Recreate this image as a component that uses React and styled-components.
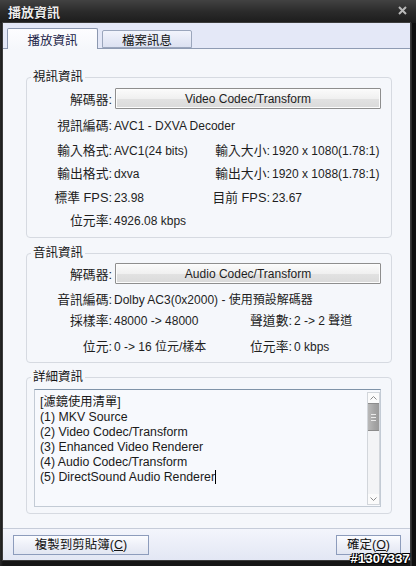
import React from 'react'
import styled, { createGlobalStyle } from 'styled-components'

const GlobalStyle = createGlobalStyle`
  html, body {
    margin: 0;
    padding: 0;
    background: #151515;
  }
  body {
    font-family: "Liberation Sans", "Noto Sans CJK TC", sans-serif;
    font-size: 12px;
    color: #1e1e1e;
  }
`

const Window = styled.div`
  position: relative;
  width: 416px;
  height: 566px;
  display: flex;
  flex-direction: column;
  background: linear-gradient(90deg, #2a2a2a 0, #161616 3px, #161616 410px, #4a4a4a 411px, #101010 412px);
  overflow: hidden;
`

const TitleBar = styled.div`
  height: 23px;
  flex: none;
  display: flex;
  align-items: center;
  justify-content: space-between;
  padding: 0 9px 0 8px;
  background: linear-gradient(#424242, #2b2b2b 50%, #1c1c1c);
`

const Title = styled.span`
  color: #ececec;
  font-weight: bold;
  font-size: 13px;
  text-shadow: 0 1px 1px #000;
`

const CloseIcon = styled.svg`
  width: 9px;
  height: 9px;
  margin-top: -3px;
`

const Body = styled.div`
  flex: 1;
  margin: 0 6px 6px 3px;
  display: flex;
  flex-direction: column;
  background: #f5f7fb;
  box-shadow: 0 0 0 1px #3c3c3c;
`

const TabStrip = styled.div`
  height: 25px;
  flex: none;
  display: flex;
  align-items: flex-end;
  gap: 4px;
  padding-left: 4px;
  background: #e4e8f7;
  border-bottom: 1px solid #8f9bb3;
`

const Tab = styled.div`
  width: ${p => p.$w}px;
  height: ${p => (p.$active ? 21 : 18)}px;
  box-sizing: border-box;
  display: flex;
  align-items: center;
  justify-content: center;
  padding-top: ${p => (p.$active ? 1 : 0)}px;
  margin-bottom: ${p => (p.$active ? -1 : 0)}px;
  border: 1px solid ${p => (p.$active ? '#8c98b0' : '#9ba6bc')};
  border-bottom: ${p => (p.$active ? 'none' : '1px solid #9ba6bc')};
  border-radius: 2px 2px 0 0;
  background: ${p => (p.$active
    ? 'linear-gradient(#fdfdff, #f5f7fb)'
    : 'linear-gradient(#f2f4fc, #dce1f1)')};
  color: ${p => (p.$active ? '#1c2448' : '#141414')};
  font-size: 12.5px;
`

const Panel = styled.div`
  flex: 1;
  display: flex;
  flex-direction: column;
  padding: 20px 18px 0 23px;
`

const Group = styled.fieldset`
  margin: ${p => p.$top || 0}px 0 0 0;
  padding: ${p => p.$pt}px 0 ${p => p.$pb}px 0;
  min-inline-size: 0;
  border: 1px solid #d6dae1;
  border-radius: 4px;
`

const Legend = styled.legend`
  margin-left: 4px;
  padding: 0 2px;
  line-height: 16px;
  font-size: 12.5px;
  color: #161616;
`

const FieldGrid = styled.div`
  display: grid;
  grid-template-columns: ${p => p.$cols};
  grid-template-rows: ${p => p.$rows};
  align-items: baseline;
  line-height: 16px;
`

const Label = styled.span`
  text-align: right;
  white-space: nowrap;
  padding-top: 6px;
  font-size: 12.8px;
`

const ButtonLabel = styled(Label)`
  align-self: center;
  padding-top: 0;
`

const Value = styled.span`
  padding-left: 2px;
  padding-top: 6px;
  white-space: nowrap;
  grid-column: ${p => (p.$span ? '2 / -1' : 'auto')};
`

const CodecButton = styled.button`
  grid-column: 2 / -1;
  align-self: start;
  height: 21px;
  margin: 0 10px 0 3px;
  padding: 0;
  font: inherit;
  color: #1e1e1e;
  border: 1px solid #8e8e8e;
  border-radius: 1px;
  background: linear-gradient(#fbfbfb, #f0f0f0 50%, #e2e2e2 51%, #dadada);
  box-shadow: inset 0 0 0 1px #fcfcfc;
`

const TextBox = styled.div`
  height: 116px;
  margin: 0 10px 0 7px;
  display: flex;
  border: 1px solid #c3cbd5;
  border-top-color: #7f93a8;
  background: #f7f9fd;
`

const TextLines = styled.div`
  flex: 1;
  padding: 5px 0 0 5px;
  line-height: 15px;
  font-size: 12.3px;
  color: #1a1a1a;
`

const Caret = styled.span`
  display: inline-block;
  width: 1px;
  height: 14px;
  vertical-align: -3px;
  background: #000;
`

const ScrollBar = styled.div`
  width: 11px;
  margin: 2px 0 1px 0;
  display: flex;
  flex-direction: column;
  border: 1px solid #d2d6db;
  background: #f3f4f6;
`

const ArrowBox = styled.div`
  height: 10px;
  flex: none;
  display: flex;
  align-items: center;
  justify-content: center;
  background: #fbfbfb;
`

const Thumb = styled.div`
  height: 26px;
  flex: none;
  display: flex;
  flex-direction: column;
  align-items: center;
  justify-content: center;
  gap: 2px;
  background: linear-gradient(90deg, #b9b9b9, #a4a4a4 60%, #9a9a9a);
  border-top: 1px solid #8c8c8c;
  border-bottom: 1px solid #8c8c8c;
`

const Grip = styled.span`
  width: 5px;
  height: 1px;
  background: #eaeaea;
`

const Track = styled.div`
  flex: 1;
`

const ButtonBar = styled.div`
  height: 31px;
  flex: none;
  display: flex;
  align-items: center;
  justify-content: space-between;
  padding: 0 9px 0 10px;
  border-top: 1px solid #c6ccd9;
  background: linear-gradient(#f3f5fc, #e3e7f4);
`

const DialogButton = styled.button`
  width: ${p => p.$w}px;
  height: 20px;
  padding: 0;
  font: inherit;
  font-size: 12.5px;
  line-height: 14px;
  color: #141414;
  border: 1px solid #8d9cbc;
  background: linear-gradient(#fbfcff, #eef0f8 50%, #e2e6f2);
`

const Watermark = styled.span`
  position: absolute;
  right: 6px;
  bottom: 0;
  font-size: 13px;
  line-height: 14px;
  font-weight: bold;
  color: #fff;
  letter-spacing: 0.2px;
  text-shadow: -1px -1px 0 #000, 1px -1px 0 #000, -1px 1px 0 #000, 1px 1px 0 #000;
`

const Chevron = ({ up }) => (
  <svg width="7" height="4" viewBox="0 0 7 4">
    <path d={up ? 'M0.5 3.5 L3.5 0.5 L6.5 3.5' : 'M0.5 0.5 L3.5 3.5 L6.5 0.5'} fill="none" stroke="#8a8a8a" strokeWidth="1" />
  </svg>
)

const filters = [
  '[濾鏡使用清單]',
  '(1) MKV Source',
  '(2) Video Codec/Transform',
  '(3) Enhanced Video Renderer',
  '(4) Audio Codec/Transform',
]

export default function App() {
  return (
    <>
      <GlobalStyle />
      <Window>
        <TitleBar>
          <Title>播放資訊</Title>
          <CloseIcon viewBox="0 0 9 9">
            <path d="M1 1 L8 8 M8 1 L1 8" stroke="#b9b9b9" strokeWidth="2" />
          </CloseIcon>
        </TitleBar>
        <Body>
          <TabStrip>
            <Tab $active $w={91}>播放資訊</Tab>
            <Tab $w={90}>檔案訊息</Tab>
          </TabStrip>
          <Panel>
            <Group $pt={3} $pb={4}>
              <Legend>視訊資訊</Legend>
              <FieldGrid $cols="85px 88px 70px 1fr" $rows="24px 25px 23px 24px 23px 26px">
                <ButtonLabel>解碼器:</ButtonLabel>
                <CodecButton>Video Codec/Transform</CodecButton>
                <Label>視訊編碼:</Label>
                <Value $span>AVC1 - DXVA Decoder</Value>
                <Label>輸入格式:</Label>
                <Value>AVC1(24 bits)</Value>
                <Label>輸入大小:</Label>
                <Value>1920 x 1080(1.78:1)</Value>
                <Label>輸出格式:</Label>
                <Value>dxva</Value>
                <Label>輸出大小:</Label>
                <Value>1920 x 1088(1.78:1)</Value>
                <Label>標準 FPS:</Label>
                <Value>23.98</Value>
                <Label>目前 FPS:</Label>
                <Value>23.67</Value>
                <Label>位元率:</Label>
                <Value $span>4926.08 kbps</Value>
              </FieldGrid>
            </Group>

            <Group $top={7} $pt={2} $pb={0}>
              <Legend>音訊資訊</Legend>
              <FieldGrid $cols="85px 128px 52px 1fr" $rows="23px 21px 26px 29px">
                <ButtonLabel>解碼器:</ButtonLabel>
                <CodecButton>Audio Codec/Transform</CodecButton>
                <Label>音訊編碼:</Label>
                <Value $span>Dolby AC3(0x2000) - 使用預設解碼器</Value>
                <Label>採樣率:</Label>
                <Value>48000 -&gt; 48000</Value>
                <Label>聲道數:</Label>
                <Value>2 -&gt; 2 聲道</Value>
                <Label>位元:</Label>
                <Value>0 -&gt; 16 位元/樣本</Value>
                <Label>位元率:</Label>
                <Value>0 kbps</Value>
              </FieldGrid>
            </Group>

            <Group $top={6} $pt={4} $pb={6}>
              <Legend>詳細資訊</Legend>
              <TextBox>
                <TextLines>
                  {filters.map(line => (
                    <div key={line}>{line}</div>
                  ))}
                  <div>(5) DirectSound Audio Renderer<Caret /></div>
                </TextLines>
                <ScrollBar>
                  <ArrowBox><Chevron up /></ArrowBox>
                  <Thumb>
                    <Grip />
                    <Grip />
                    <Grip />
                  </Thumb>
                  <Track />
                  <ArrowBox><Chevron /></ArrowBox>
                </ScrollBar>
              </TextBox>
            </Group>
          </Panel>
          <ButtonBar>
            <DialogButton $w={136}>複製到剪貼簿(<u>C</u>)</DialogButton>
            <DialogButton $w={65}>確定(<u>O</u>)</DialogButton>
          </ButtonBar>
        </Body>
        <Watermark>#1307337</Watermark>
      </Window>
    </>
  )
}
